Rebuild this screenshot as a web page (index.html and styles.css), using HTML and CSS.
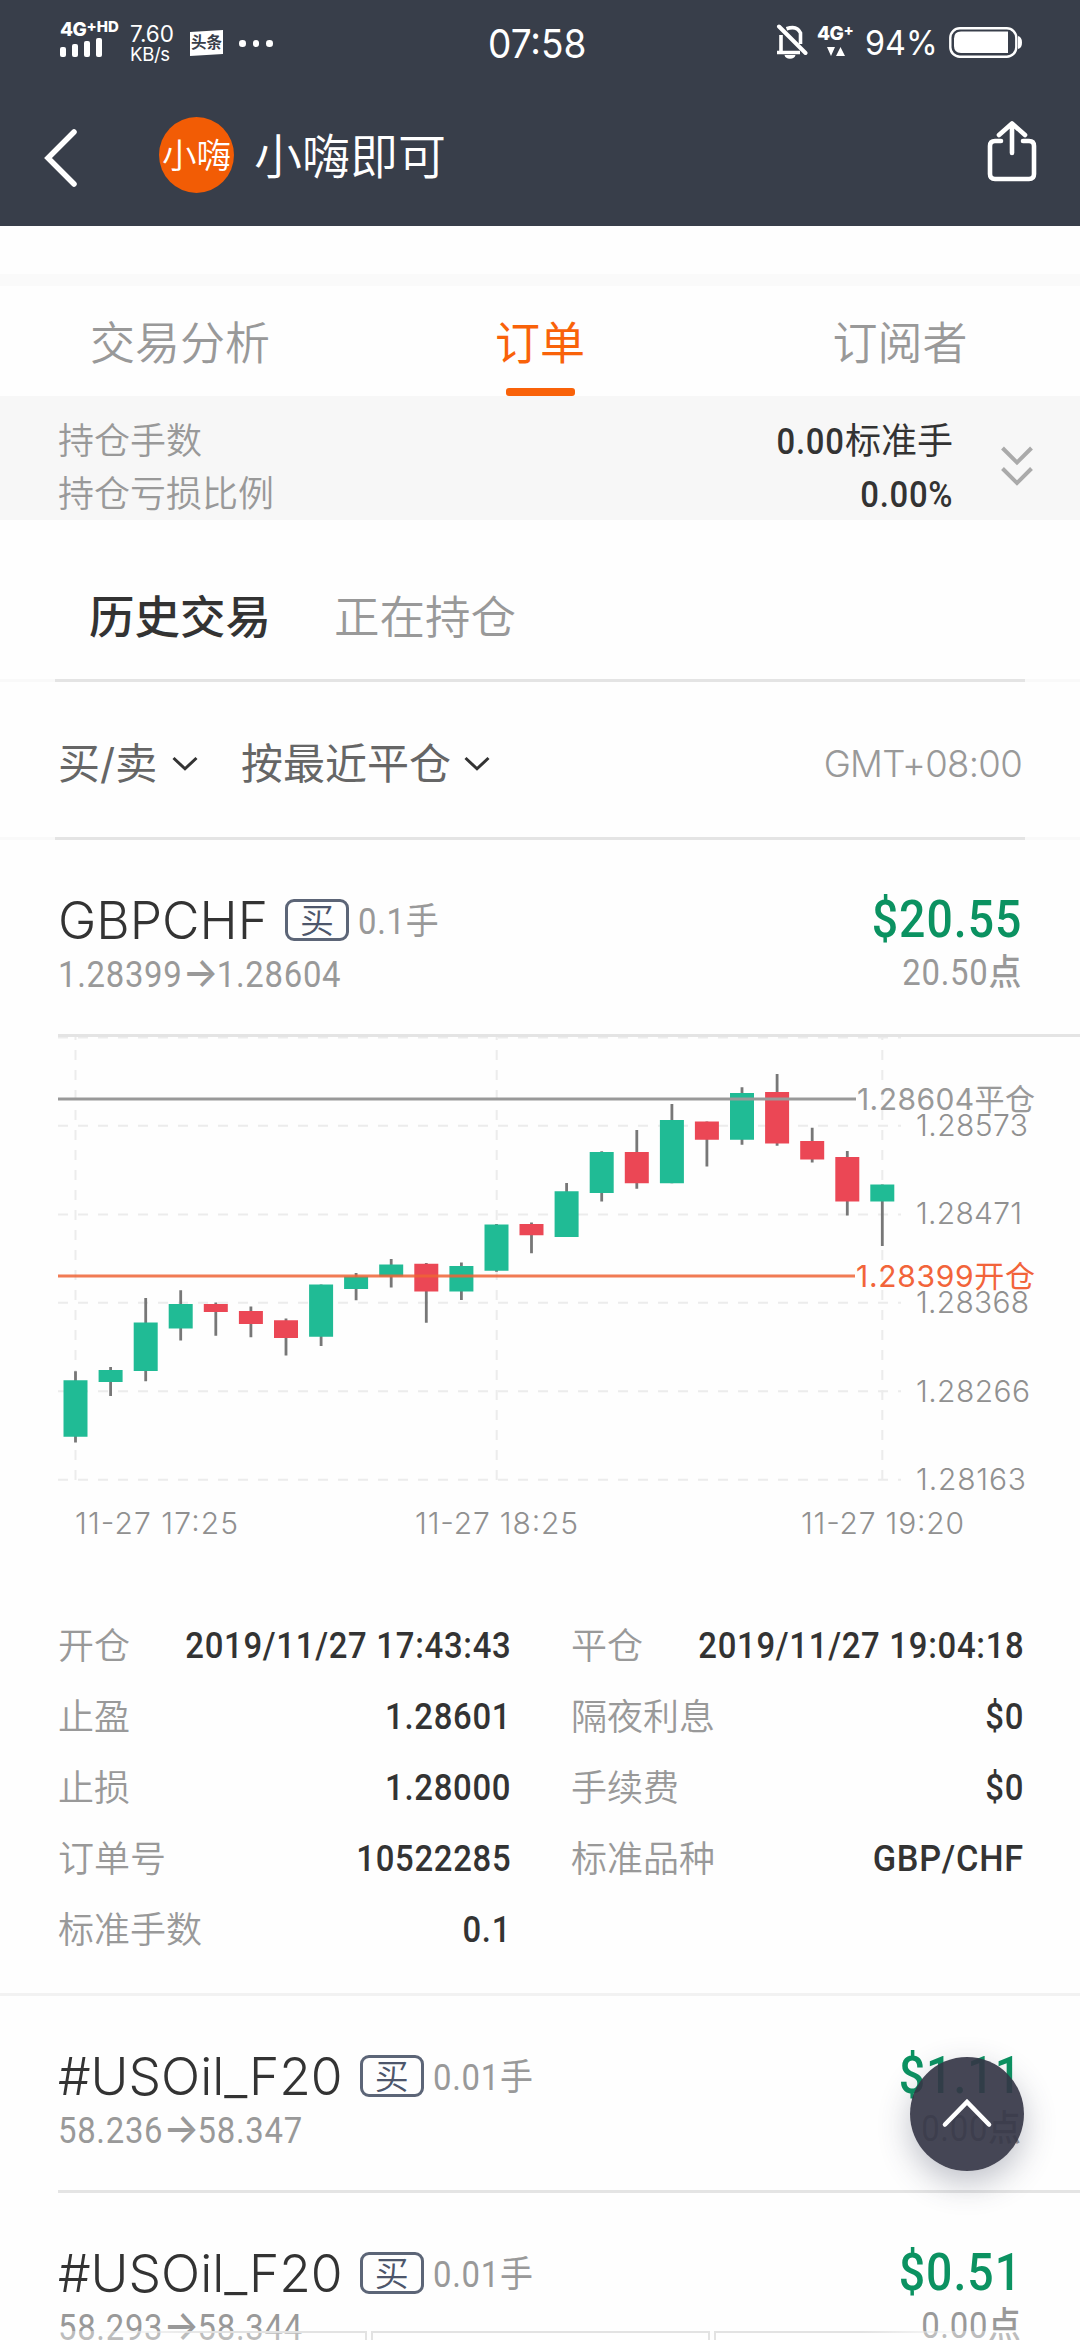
FILE: index.html
```html
<!DOCTYPE html>
<html lang="zh-CN">
<head>
<meta charset="utf-8">
<title>小嗨即可</title>
<link rel="stylesheet" href="styles.css">
</head>
<body>
<div class="screen">
  <header class="header">
    <div class="status">
      <div class="signal">
        <div class="net">4G<span class="net-sup">+HD</span></div>
        <div class="bars"><i class="b1"></i><i class="b2"></i><i class="b3"></i><i class="b4"></i></div>
      </div>
      <div class="speed"><div class="speed-n">7.60</div><div class="speed-u">KB/s</div></div>
      <div class="toutiao">头条</div>
      <div class="dots"><i></i><i></i><i></i></div>
      <div class="clock">07:58</div>
      <svg class="bell" width="32" height="36" viewBox="0 0 32 36" fill="none" stroke="#fff">
        <path d="M1 28.500H24M5 28V11M10.500 4.800Q21 1 24.500 9V20" stroke-width="3.600"/>
        <path d="M8.500 31a5.600 4.600 0 0 0 11 0z" fill="#fff" stroke="none"/>
        <path d="M3 2.500L29.500 29" stroke-width="4" stroke-linecap="round"/>
      </svg>
      <div class="net2"><div class="net">4G<span class="net-sup">+</span></div>
        <svg width="18" height="9" viewBox="0 0 18 9"><path d="M0 0h8L4 9zM9 9h9L13.500 0z" fill="#fff"/></svg>
      </div>
      <div class="pct">94%</div>
      <svg class="battery" width="74" height="32" viewBox="0 0 74 32">
        <rect x="1.300" y="1.300" width="66" height="28.400" rx="9.500" fill="none" stroke="#fff" stroke-width="2.400"/>
        <path d="M12 4.500H59V26H12Q5 26 5 19V11.500Q5 4.500 12 4.500z" fill="#fff"/>
        <path d="M69 9q4 1 4 6.500T69 22z" fill="#fff"/>
      </svg>
    </div>
    <div class="nav">
      <svg class="back" width="36" height="64" viewBox="0 0 36 64"><path d="M31 6L5 32L31 58" fill="none" stroke="#fff" stroke-width="5.500" stroke-linecap="round"/></svg>
      <div class="avatar">小嗨</div>
      <h1 class="title">小嗨即可</h1>
      <svg class="share" width="50" height="62" viewBox="0 0 50 62" fill="none" stroke="#fff" stroke-width="4.600" stroke-linecap="round"><path d="M14 20H8q-5 0-5 5V53q0 5 5 5H42q5 0 5-5V25q0-5-5-5H36M25 32V3M12 14L25 2.500L38 14" stroke-linejoin="round"/></svg>
    </div>
  </header>
  <div class="strip"></div>
  <nav class="tabs">
    <div class="tab">交易分析</div>
    <div class="tab active">订单</div>
    <div class="tab">订阅者</div>
  </nav>
  <section class="summary">
    <div class="summary-rows">
      <div class="row"><span class="label">持仓手数</span><span class="value"><span class="din">0.00</span>标准手</span></div>
      <div class="row"><span class="label">持仓亏损比例</span><span class="value"><span class="din">0.00%</span></span></div>
    </div>
    <svg class="expand" width="32" height="42" viewBox="0 0 32 42" fill="none" stroke="#aaa" stroke-width="4"><path d="M1.500 3L16 17.500L30.500 3M1.500 23.500L16 38L30.500 23.500"/></svg>
  </section>
  <nav class="subtabs"><span class="subtab on">历史交易</span><span class="subtab">正在持仓</span></nav>
  <div class="filters">
    <span class="filter">买/卖</span><svg class="caret" width="26" height="16" viewBox="0 0 26 16"><path d="M1.500 2L13 12.800L24.500 2" fill="none" stroke="#333" stroke-width="3"/></svg>
    <span class="filter second">按最近平仓</span><svg class="caret" width="26" height="16" viewBox="0 0 26 16"><path d="M1.500 2L13 12.800L24.500 2" fill="none" stroke="#333" stroke-width="3"/></svg>
    <span class="gmt">GMT+08:00</span>
  </div>

  <article class="trade">
    <div class="trade-top"><span class="symbol">GBPCHF</span><span class="side">买</span><span class="lots din-l">0.1手</span><span class="profit din">$20.55</span></div>
    <div class="trade-sub"><span class="din-l">1.28399<span class="arrow">→</span>1.28604</span><span class="din">20.50点</span></div>
  </article>
  <svg class="chart" width="1080" height="523" viewBox="0 0 1080 523">
    <g stroke="#ececec" stroke-width="2" stroke-dasharray="10 10">
      <path d="M58 0.500H901M58 88.700H901M58 177.400H901M58 265.800H901M58 354.300H901M58 442.800H901"/>
      <path d="M75.500 443V0M496.700 443V0M882.300 443V0"/>
    </g>
    <path class="wick" d="M75.500 334.300V405.600M110.600 330.100V359.100M145.700 260.900V344.300M180.700 253.300V303.600M215.800 265.400V298.800M250.900 269.500V300.200M286 281.600V318.400M321.100 247.500V309.100M356.100 236.100V263.300M391.200 222V250.600M426.300 226.100V285.700M461.400 225.400V263M496.500 186.900V234.700M531.500 185.500V216.200M566.600 145.900V200M601.700 114.200V164.500M636.800 92.900V151.800M671.900 67V146.200M706.900 84.600V129.400M742 50.200V107.700M777.100 37.100V108.700M812.200 90.800V125.600M847.300 113.900V178.600M882.300 147.600V208.900"/>
    <path class="up" d="M75.500 343.200V399.700M110.600 332.900V345M145.700 285.400V333.900M180.700 267.100V291.600M321.100 247.500V299.800M356.100 239.600V252M391.200 227.500V239.600M461.400 228.900V254.400M496.500 187.600V233.700M566.600 154.200V200M601.700 114.900V155.900M671.900 82.900V146.200M742 56V102.800M882.300 147.600V164.500"/>
    <path class="down" d="M215.800 267.100V275M250.900 274V287.100M286 283.300V300.900M426.300 226.800V254.400M531.500 186.900V198.200M636.800 114.900V146.200M706.900 84.600V102.800M777.100 55V106.600M812.200 103.900V122.500M847.300 120.100V164.500"/>
    <path d="M58 61.900H856" stroke="#999" stroke-width="3"/>
    <path d="M58 238.900H855" stroke="#ee6436" stroke-opacity=".85" stroke-width="3"/>
    <g class="axis">
      <text x="916" y="99.400" textLength="112">1.28573</text>
      <text x="916" y="187.400" textLength="106">1.28471</text>
      <text x="916" y="276" textLength="113">1.28368</text>
      <text x="916" y="365" textLength="114">1.28266</text>
      <text x="916" y="452.700" textLength="110">1.28163</text>
      <text x="75" y="497.200" textLength="163">11-27 17:25</text>
      <text x="415" y="497.200" textLength="163">11-27 18:25</text>
      <text x="801" y="497.200" textLength="163">11-27 19:20</text>
    </g>
    <g class="mark">
      <text x="857" y="73.200" textLength="178">1.28604平仓</text>
      <text class="open" x="856" y="249.900" textLength="179">1.28399开仓</text>
    </g>
  </svg>
  <dl class="details">
    <div class="row"><dt class="label">开仓</dt><dd class="din">2019/11/27 17:43:43</dd></div>
    <div class="row"><dt class="label">平仓</dt><dd class="din">2019/11/27 19:04:18</dd></div>
    <div class="row"><dt class="label">止盈</dt><dd class="din">1.28601</dd></div>
    <div class="row"><dt class="label">隔夜利息</dt><dd class="din">$0</dd></div>
    <div class="row"><dt class="label">止损</dt><dd class="din">1.28000</dd></div>
    <div class="row"><dt class="label">手续费</dt><dd class="din">$0</dd></div>
    <div class="row"><dt class="label">订单号</dt><dd class="din">10522285</dd></div>
    <div class="row"><dt class="label">标准品种</dt><dd class="din pair">GBP/CHF</dd></div>
    <div class="row"><dt class="label">标准手数</dt><dd class="din">0.1</dd></div>
  </dl>
  <article class="trade">
    <div class="trade-top"><span class="symbol">#USOil_F20</span><span class="side">买</span><span class="lots din-l">0.01手</span><span class="profit din">$1.11</span></div>
    <div class="trade-sub"><span class="din-l">58.236<span class="arrow">→</span>58.347</span><span class="din">0.00点</span></div>
  </article>
  <article class="trade">
    <div class="trade-top"><span class="symbol">#USOil_F20</span><span class="side">买</span><span class="lots din-l">0.01手</span><span class="profit din">$0.51</span></div>
    <div class="trade-sub"><span class="din-l">58.293<span class="arrow">→</span>58.344</span><span class="din">0.00点</span></div>
  </article>
  <div class="to-top"><svg width="54" height="34" viewBox="0 0 54 34"><path d="M5 28.500L27 6L49 28.500" fill="none" stroke="#fff" stroke-width="4.600" stroke-linecap="round"/></svg></div>
  <div class="bottom"><i></i><i></i><i></i></div>
</div>
</body>
</html>
```
FILE: styles.css
```css
* { box-sizing: border-box; }
body { margin: 0; background: #fefefe; }
.screen {
  position: relative;
  width: 1080px;
  height: 2340px;
  overflow: hidden;
  background: #fefefe;
  font-family: Inter, "Noto Sans CJK SC", sans-serif;
  color: #333;
}
svg { display: block; flex: none; }

/* header */
.header { height: 226px; background: #383e4a; color: #fff; }
.status { display: flex; height: 84px; align-items: flex-start; }
.signal { width: 58px; margin: 20px 0 0 60px; }
.net { font-size: 19px; line-height: 19px; font-weight: 800; white-space: nowrap; letter-spacing: -0.5px; display: flex; }
.net-sup { font-size: 15px; line-height: 14px; letter-spacing: 0; }
.bars { display: flex; gap: 6px; align-items: flex-end; height: 18px; }
.bars i { width: 6px; border-radius: 2px; background: #fff; }
.b1 { height: 10px; } .b2 { height: 13px; } .b3 { height: 16px; } .b4 { height: 19px; }
.speed { width: 60px; margin: 22px 0 0 12px; }
.speed-n { font-size: 22.5px; line-height: 23px; }
.speed-u { font-size: 18.5px; line-height: 19px; letter-spacing: -0.3px; }
.toutiao {
  width: 33px; height: 26px; margin-top: 30px;
  background: #fff; color: #383e4a;
  clip-path: polygon(0 8%, 100% 0, 100% 92%, 0 100%);
  font-size: 15.5px; line-height: 26px; font-weight: 700; text-align: center; white-space: nowrap;
}
.dots { display: flex; gap: 7px; margin: 40px 0 0 16px; width: 245px; }
.dots i { width: 6.5px; height: 6.5px; border-radius: 50%; background: #fff; }
.clock { width: 108px; margin: 22px 0 0 4px; font-size: 39px; line-height: 44px; transform: scaleX(.95); transform-origin: left; }
.bell { margin: 24px 0 0 180px; }
.net2 { width: 48px; margin: 24px 0 0 9px; }
.net2 svg { margin: 4px 0 0 10px; }
.pct { width: 84px; margin: 23px 0 0 0; font-size: 34px; line-height: 40px; transform: scaleX(.95); transform-origin: left; }
.battery { margin-top: 26.5px; }
.nav { display: flex; align-items: center; height: 142px; }
.back { margin: 5px 0 0 43px; }
.avatar {
  width: 75px; height: 76px; margin: 0 0 1px 80px; border-radius: 50%;
  background: #f25c05; font-size: 34.5px; line-height: 78px; font-weight: 350; text-align: center; white-space: nowrap;
}
.title { margin: 3px 0 0 20px; font-size: 48px; line-height: 60px; font-weight: 350; }
.share { margin: -6px 43px 0 auto; }

/* tabs */
.strip { height: 12px; margin-top: 48px; background: #fafafa; }
.tabs { display: grid; grid-template-columns: repeat(3, 1fr); height: 110px; }
.tab { display: flex; flex-direction: column; justify-content: space-between; align-items: center; padding-top: 28px; font-size: 45px; line-height: 60px; font-weight: 350; color: #999; }
.tab.active { color: #f96209; font-weight: 400; }
.tab.active::after { content: ""; width: 69px; height: 8px; border-radius: 3px; background: #f96209; }

.summary { display: flex; height: 124px; padding: 19px 47px 0 58px; background: #f7f7f7; }
.summary-rows { width: 895px; margin-right: 48px; }
.summary .expand { margin-top: 30px; }
.row { display: flex; justify-content: space-between; font-size: 36px; line-height: 52px; white-space: nowrap; }
.label { font-size: 36px; font-weight: 350; color: #999; }
.value { font-weight: 400; }

/* narrow numerals */
.din, .din-l {
  display: inline-block;
  font-family: Roboto, "Noto Sans CJK SC", sans-serif;
  font-weight: 500;
  font-size: 36.5px;
  letter-spacing: .022em;
  transform: scaleX(.9);
  transform-origin: right;
  white-space: nowrap;
}
.din-l { transform-origin: left; }

.subtabs, .filters { border-bottom: 3px solid; border-image: linear-gradient(90deg, #f9f9f9 58px, #e4e4e4 58px, #e4e4e4 1022px, #f9f9f9 1022px) 3; }
.subtabs { display: flex; gap: 63px; height: 162px; padding: 68px 0 0 89px; font-size: 45.5px; line-height: 60px; }
.subtab { font-weight: 350; color: #999; }
.subtab.on { font-weight: 500; color: #333; }
.filters { display: flex; align-items: center; height: 158px; padding: 8px 58px 0; color: #666; }
.filter { width: 100px; font-size: 42px; line-height: 56px; white-space: nowrap; }
.filter.second { width: 209px; margin-left: 43px; }
.caret { margin: 0 0 0 14px; }
.gmt { margin-left: auto; font-size: 36.5px; font-weight: 300; letter-spacing: -.7px; color: #999; }

/* trades */
.trade { height: 197px; margin-left: 58px; padding: 50px 58px 0 0; border-bottom: 3px solid #e4e4e4; }
.trade-top { display: flex; align-items: center; height: 60px; }
.symbol { font-size: 51.5px; font-weight: 300; line-height: 60px; }
.side { width: 64px; height: 42px; margin-left: 17px; border: 3px solid #5c6577; border-radius: 9px; color: #4d566b; font-size: 34px; line-height: 37px; font-weight: 350; text-align: center; }
.lots { margin-left: 9px; color: #999; font-weight: 400; line-height: 60px; padding-top: 3px; }
.profit { margin-left: auto; color: #0b9261; font-size: 51.5px; line-height: 60px; }
.trade-sub { display: flex; justify-content: space-between; margin-top: 1px; line-height: 44px; color: #999; }
.trade-sub .din, .trade-sub .din-l { font-weight: 450; }
.arrow { font-family: Inter; font-size: 42px; line-height: 1; letter-spacing: -2px; }

/* chart */
.wick { stroke: #777; stroke-width: 2.8; }
.up { stroke: #20bb95; stroke-width: 24; }
.down { stroke: #eb4755; stroke-width: 24; }
.axis { font-size: 30px; font-weight: 300; fill: #909090; }
.mark { font-size: 30px; fill: #999; }
.open { fill: #f2643a; }

.details { display: grid; grid-template-columns: 453px 453px; column-gap: 60px; grid-auto-rows: 71px; height: 436px; margin: 0; padding: 60px 0 0 58px; border-bottom: 3px solid #f2f2f2; }
.details dd { margin: 0; }
.details .pair { transform: scaleX(.94); }

/* overlays */
.to-top {
  position: absolute; left: 910px; top: 2057px; width: 114px; height: 114px; border-radius: 50%;
  background: rgba(53, 54, 70, .92); box-shadow: 0 12px 32px rgba(60, 66, 90, .32);
  display: grid; place-items: center;
}
.to-top svg { margin-bottom: 2px; }
.bottom { position: absolute; left: 0; right: 0; bottom: 0; height: 9px; display: grid; grid-template-columns: 367px 339px 1fr; column-gap: 4px; }
.bottom i { border: 2px solid #e2e2e2; border-bottom: 0; background: rgba(255, 255, 255, .35); }
.bottom i:first-child { border-left: 0; border-image: linear-gradient(90deg, transparent 25%, #e2e2e2 60%) 1; border-width: 2px 2px 0 0; }
.bottom i:last-child { border-image: linear-gradient(270deg, transparent 30%, #e2e2e2 60%) 1; border-width: 2px 0 0 2px; }
```
